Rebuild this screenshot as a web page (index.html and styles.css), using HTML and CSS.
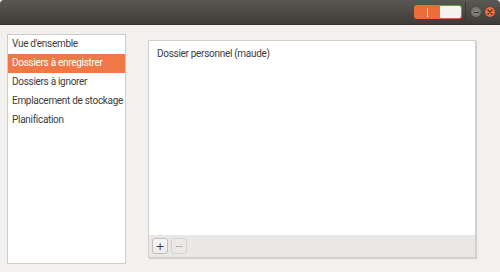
FILE: index.html
```html
<!DOCTYPE html>
<html lang="fr">
<head>
    <meta charset="UTF-8">
    <title>Sauvegardes</title>
    <link rel="stylesheet" href="styles.css">
</head>
<body>

<div class="window">
    <div class="titlebar">
        <div class="switch">
            <div class="switch-on"><span class="bar"></span></div>
            <div class="switch-off"></div>
        </div>
        <div class="sep"></div>
        <div class="wbtn minimize"><span></span></div>
        <div class="wbtn close">
            <svg width="6" height="6" viewBox="0 0 6 6"><path d="M1 1L5 5M5 1L1 5" stroke="#5a2a18" stroke-width="1.3" stroke-linecap="round"/></svg>
        </div>
    </div>

    <div class="main">
        <ul class="sidebar">
            <li>Vue d'ensemble</li>
            <li class="selected">Dossiers à enregistrer</li>
            <li>Dossiers à ignorer</li>
            <li>Emplacement de stockage</li>
            <li>Planification</li>
        </ul>

        <div class="panel">
            <div class="list">
                <div class="row">Dossier personnel (maude)</div>
            </div>
            <div class="toolbar">
                <button class="tb-btn">+</button>
                <button class="tb-btn disabled">−</button>
            </div>
        </div>
    </div>
</div>

</body>
</html>
```

FILE: styles.css
```css
body {
    margin: 0;
    font-family: Roboto, "Noto Sans", sans-serif;
    font-size: 10px;
    letter-spacing: -0.3px;
    color: #3c3c3c;
    background: #f2f1f0;
}
.window {
    width: 500px;
    height: 272px;
    display: flex;
    flex-direction: column;
    overflow: hidden;
}
.titlebar {
    height: 25px;
    flex: none;
    display: flex;
    align-items: center;
    justify-content: flex-end;
    padding-right: 5px;
    background: linear-gradient(#5b5752, #3f3c38);
    border-radius: 4px 4px 0 0;
    border-bottom: 1px solid #35332f;
    box-sizing: border-box;
}
.switch {
    display: flex;
    width: 48px;
    height: 14px;
    border-radius: 3px;
    overflow: hidden;
    margin-right: 3px;
}
.switch-on {
    width: 26px;
    background: #ed6d3a;
    display: flex;
    align-items: center;
    justify-content: center;
}
.switch-on .bar {
    width: 1px;
    height: 9px;
    background: #fbe3d8;
}
.switch-off {
    flex: 1;
    background: #f4f3f2;
    border: 1px solid #c96a45;
    border-left: none;
    border-radius: 0 3px 3px 0;
}
.sep {
    width: 1px;
    height: 20px;
    background: #3a3834;
    margin-right: 1px;
}
.wbtn {
    width: 10px;
    height: 10px;
    border-radius: 50%;
    display: flex;
    align-items: center;
    justify-content: center;
    margin-left: 4px;
}
.minimize {
    background: radial-gradient(#8a8782, #6d6a66);
}
.minimize span {
    width: 5px;
    height: 1px;
    background: #3c3a37;
}
.close {
    background: radial-gradient(#f48456, #e15a28);
}
.main {
    flex: 1;
    display: flex;
    padding: 9px 24px 8px 7px;
}
.sidebar {
    list-style: none;
    margin: 0;
    padding: 0;
    width: 117px;
    background: #fff;
    border: 1px solid #cfcbc7;
    align-self: stretch;
}
.sidebar li {
    height: 19px;
    line-height: 18px;
    padding-left: 4px;
    white-space: nowrap;
}
.sidebar li.selected {
    background: #f07746;
    color: #fff;
}
.panel {
    flex: 1;
    margin: 6px 0 6px 22px;
    display: flex;
    flex-direction: column;
    background: #fff;
    border: 1px solid #d3d0cc;
    box-shadow: 1px 1px 1px rgba(0, 0, 0, 0.12);
}
.list {
    flex: 1;
}
.row {
    padding: 7px 8px;
}
.toolbar {
    height: 22px;
    background: #eae8e6;
    display: flex;
    align-items: center;
    padding-left: 3px;
    gap: 3px;
}
.tb-btn {
    width: 16px;
    height: 16px;
    padding: 0;
    border: 1px solid #c2beba;
    border-radius: 3px;
    background: linear-gradient(#f8f7f6, #eceae8);
    font-family: "DejaVu Sans", sans-serif;
    font-size: 11px;
    line-height: 13px;
    letter-spacing: 0;
    color: #3c3c3c;
}
.tb-btn.disabled {
    color: #b0aca8;
    border-color: #d6d3cf;
    background: #ebe9e7;
}
```
